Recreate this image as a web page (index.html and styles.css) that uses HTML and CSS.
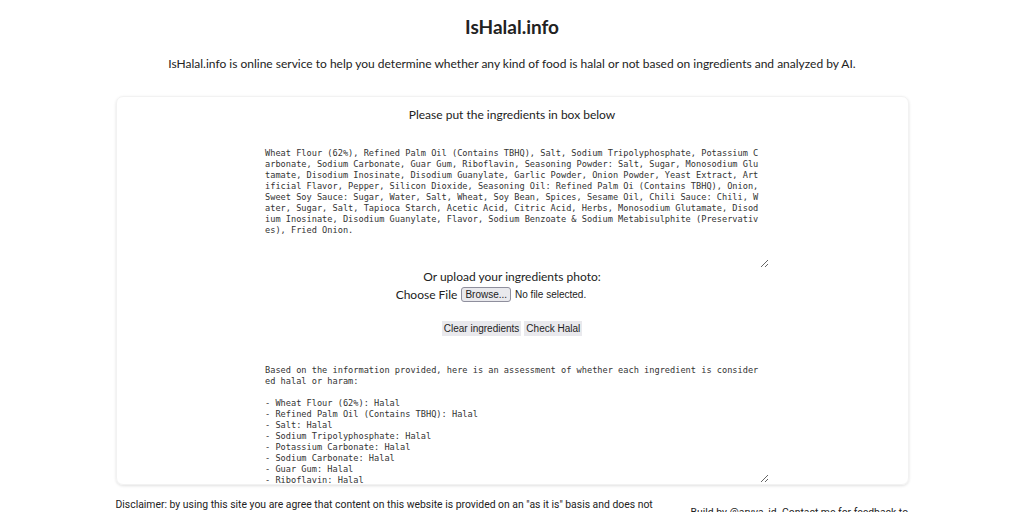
FILE: index.html
```html
<!DOCTYPE html>
<html lang="en">
<head>
    <meta charset="UTF-8">
    <meta name="viewport" content="width=device-width, initial-scale=1.0">
    <title>IsHalal.info</title>
    <link rel="stylesheet" href="styles.css">
</head>
<body>
    <div class="container">
        <h1 class="title">IsHalal.info</h1>
        <p class="subtitle">IsHalal.info is online service to help you determine whether any kind of food is halal or not based on ingredients and analyzed by AI.</p>

        <div class="card">
            <p class="card-label">Please put the ingredients in box below</p>
            <div class="box-row">
                <textarea class="box" id="ingredients">Wheat Flour (62%), Refined Palm Oil (Contains TBHQ), Salt, Sodium Tripolyphosphate, Potassium Carbonate, Sodium Carbonate, Guar Gum, Riboflavin, Seasoning Powder: Salt, Sugar, Monosodium Glutamate, Disodium Inosinate, Disodium Guanylate, Garlic Powder, Onion Powder, Yeast Extract, Artificial Flavor, Pepper, Silicon Dioxide, Seasoning Oil: Refined Palm Oi (Contains TBHQ), Onion, Sweet Soy Sauce: Sugar, Water, Salt, Wheat, Soy Bean, Spices, Sesame Oil, Chili Sauce: Chili, Water, Sugar, Salt, Tapioca Starch, Acetic Acid, Citric Acid, Herbs, Monosodium Glutamate, Disodium Inosinate, Disodium Guanylate, Flavor, Sodium Benzoate &amp; Sodium Metabisulphite (Preservatives), Fried Onion.</textarea>
            </div>

            <div class="upload">
                <div class="upload-label">Or upload your ingredients photo:</div>
                <div class="file-row">
                    <span>Choose File</span>
                    <span class="file-input">
                        <button class="browse">Browse...</button>
                        <span class="file-name">No file selected.</span>
                    </span>
                </div>
            </div>

            <div class="actions">
                <button class="btn" onclick="clearIngredients()">Clear ingredients</button>
                <button class="btn">Check Halal</button>
            </div>

            <div class="box-row">
                <textarea class="box result" readonly>Based on the information provided, here is an assessment of whether each ingredient is considered halal or haram:

- Wheat Flour (62%): Halal
- Refined Palm Oil (Contains TBHQ): Halal
- Salt: Halal
- Sodium Tripolyphosphate: Halal
- Potassium Carbonate: Halal
- Sodium Carbonate: Halal
- Guar Gum: Halal
- Riboflavin: Halal
- Seasoning Powder: Halal
- Sugar: Halal
- Monosodium Glutamate: Halal</textarea>
            </div>
        </div>

        <div class="footer">
            <div class="disclaimer">Disclaimer: by using this site you are agree that content on this website is provided on an "as it is" basis and does not guarantee the accuracy of the result. The analysis is generated by AI and may contain mistakes, so please always check the halal certification label from the authority before you consume any product.</div>
            <div class="credit">Build by @aryva_id. Contact me for feedback to aryva.id@gmail.com</div>
        </div>
    </div>

    <script>
        function clearIngredients() {
            document.getElementById('ingredients').value = '';
        }
    </script>
</body>
</html>
```

FILE: styles.css
```css
body {
    margin: 0;
    font-family: 'Lato', 'Noto Sans', sans-serif;
    color: #222;
    background-color: #fff;
}
.container {
    width: 793px;
    margin: 0 auto;
    text-align: center;
}
.title {
    font-size: 19px;
    font-weight: bold;
    margin: 0;
    padding-top: 16px;
    line-height: 22px;
}
.subtitle {
    font-size: 12px;
    margin: 0;
    padding-top: 18px;
    line-height: 16px;
}
.card {
    margin-top: 24px;
    border-radius: 7px;
    box-shadow: 0 1px 3px rgba(0, 0, 0, 0.12);
    border: 1px solid #f2f2f2;
    padding: 10px 0 1px;
}
.card-label {
    font-size: 12px;
    margin: 0;
    line-height: 16px;
}
.box-row {
    display: flex;
    justify-content: center;
    padding-left: 8px;
}
.box {
    width: 496px;
    height: 118px;
    margin: 0;
    padding: 2px 8px 2px 2px;
    border: none;
    outline: none;
    font-family: 'DejaVu Sans Mono', 'Liberation Mono', monospace;
    font-size: 8.65px;
    line-height: 11px;
    color: #333;
    word-break: break-all;
    background: #fff;
    scrollbar-width: none;
}
.box::-webkit-scrollbar {
    display: none;
}
#ingredients {
    margin-top: 23px;
}
.upload {
    font-size: 12px;
    line-height: 17px;
}
.file-row {
    display: flex;
    justify-content: center;
    align-items: center;
    gap: 4px;
    line-height: 19px;
}
.file-input {
    display: flex;
    align-items: center;
    gap: 4px;
    width: 167px;
    font-family: 'Liberation Sans', Arial, sans-serif;
    font-size: 10px;
    text-align: left;
}
.browse {
    font-family: 'Liberation Sans', Arial, sans-serif;
    font-size: 10px;
    padding: 1px 3px;
    background-color: #e9e9ed;
    border: 1px solid #8f8f9d;
    border-radius: 3px;
    color: #222;
}
.actions {
    display: flex;
    justify-content: center;
    gap: 3px;
    margin-top: 17px;
}
.btn {
    font-family: 'Liberation Sans', Arial, sans-serif;
    font-size: 10px;
    padding: 2px 2px;
    background-color: #e9e9ed;
    border: none;
    border-radius: 0;
    color: #222;
}
.result {
    margin-top: 27px;
    height: 116px;
}
.footer {
    display: flex;
    justify-content: space-between;
    align-items: center;
    text-align: left;
    margin-top: 12px;
    font-family: 'Roboto', 'Liberation Sans', sans-serif;
    font-size: 10.4px;
    line-height: 16px;
}
.disclaimer {
    width: 545px;
}
.credit {
    width: 218px;
}
```
